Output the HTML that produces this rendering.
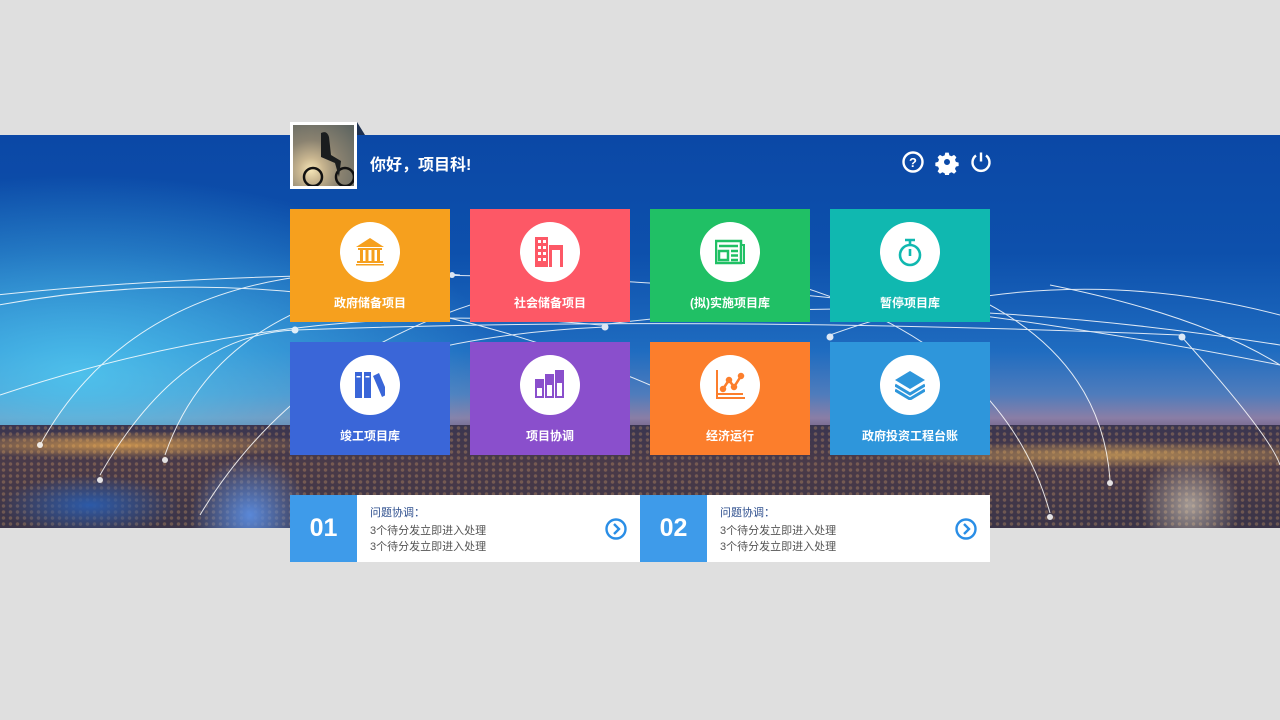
<!DOCTYPE html>
<html><head><meta charset="utf-8"><style>
*{margin:0;padding:0;box-sizing:border-box}
body{width:1280px;height:720px;background:#dfdfdf;position:relative;overflow:hidden;font-family:"Liberation Sans","Noto Sans CJK SC",sans-serif}
.bg{position:absolute;left:0;top:135px;width:1280px;height:393px;overflow:hidden;
background:
radial-gradient(ellipse 420px 200px at 80px 240px,rgba(80,200,240,.9),rgba(80,200,240,0) 100%),
linear-gradient(180deg,#0b48a6 0%,#0d50ac 30%,#1f6cc0 55%,#4f7cbc 66%,#8a7ea6 72%,#6a5a7e 76%,#2a2840 82%,#3a3048 100%);}
.city{position:absolute;left:0;top:290px;width:1280px;height:103px;
background:
radial-gradient(ellipse 200px 14px at 120px 20px,rgba(250,180,80,.7),transparent 100%),
radial-gradient(ellipse 260px 14px at 1120px 30px,rgba(250,190,90,.6),transparent 100%),
radial-gradient(ellipse 90px 30px at 90px 80px,#2c5aa8 0,transparent 100%),
radial-gradient(ellipse 60px 60px at 250px 90px,#5a88d8 0,transparent 100%),
radial-gradient(ellipse 50px 50px at 1190px 80px,rgba(230,220,200,.6),transparent 100%),
radial-gradient(circle at 50% 50%,rgba(255,190,110,.25) 0 1.5px,transparent 2px) 0 0/7px 6px,
linear-gradient(180deg,#3a3550 0%,#4a3a48 40%,#3a3448 100%)}
.av{position:absolute;left:290px;top:122px;width:67px;height:67px;border:3px solid #fff;
background:radial-gradient(circle at 18px 45px,#f6e6b8 0,#c9b690 12px,#8a8270 30px,#5d6460 60px)}
.hi{position:absolute;left:370px;top:151px;color:#fff;font-size:16px;font-weight:bold}
.tile{position:absolute;width:160px;height:113px;color:#fff;text-align:center;font-size:12px;font-weight:bold}
.tile .c{position:absolute;left:50px;top:13px;width:60px;height:60px;border-radius:50%;background:#fff}
.tile .c svg{position:absolute;left:15px;top:15px}
.tile .l{position:absolute;left:0;right:0;top:85px}
.card{position:absolute;top:495px;width:350px;height:67px;background:#fff}
.card .n{position:absolute;left:0;top:0;width:67px;height:67px;background:#3e9bea;color:#fff;font-size:25px;font-weight:bold;text-align:center;line-height:67px}
.card .t{position:absolute;left:80px;top:9px;font-size:11px;color:#2e4f8e}
.card .a{position:absolute;left:80px;top:28px;font-size:11px;color:#555;line-height:16px}
.card .g{position:absolute;left:315px;top:23px}
</style></head><body>
<div class="bg">
<div class="city"></div>
<svg width="1280" height="393" style="position:absolute;left:0;top:0" fill="none" stroke="#fff" stroke-width="1" opacity=".85">
<path d="M-50 180 Q300 100 650 250"/><path d="M-50 165 Q600 90 1330 240"/>
<path d="M200 380 Q320 180 600 140"/><path d="M40 310 Q150 110 460 140"/>
<path d="M0 260 Q300 160 600 190"/><path d="M600 190 Q900 150 1280 210"/>
<path d="M295 195 Q700 180 1180 200"/><path d="M830 200 Q1050 120 1280 180"/>
<path d="M1050 378 Q1000 200 760 140"/><path d="M1110 345 Q1100 200 920 140"/>
<path d="M1180 200 Q1270 300 1280 330"/><path d="M100 340 Q180 200 295 195"/>
<path d="M300 260 Q420 200 605 192"/><path d="M165 320 Q220 160 450 140"/>
<path d="M1050 150 Q1200 180 1280 230"/>
<g fill="#fff" stroke="none"><circle cx="295" cy="195" r="3.5"/><circle cx="605" cy="192" r="3.5"/><circle cx="830" cy="202" r="3.5"/><circle cx="1182" cy="202" r="3.5"/><circle cx="452" cy="140" r="3"/><circle cx="40" cy="310" r="3"/><circle cx="100" cy="345" r="3"/><circle cx="165" cy="325" r="3"/><circle cx="1050" cy="382" r="3"/><circle cx="1110" cy="348" r="3"/></g>
</svg>
</div>
<div class="av"><svg width="61" height="61"><circle cx="20" cy="52" r="9" stroke="#111" stroke-width="2.5" fill="none"/><circle cx="52" cy="52" r="9" stroke="#111" stroke-width="2.5" fill="none"/><path d="M28 8 q6 -3 8 4 l2 18 l10 6 l-2 16 l-4 -14 l-14 -6 z" fill="#1a1d1e"/></svg></div>
<svg style="position:absolute;left:355px;top:122px" width="12" height="14"><path d="M2 0 L10 13 L2 13z" fill="#1d3050"/></svg>
<div class="hi">你好，项目科!</div>
<svg style="position:absolute;left:902px;top:151px" width="92" height="24" fill="none" stroke="#fff" stroke-width="2.4">
<circle cx="11" cy="11" r="9.5"/><text x="11" y="16" font-size="13" font-weight="bold" fill="#fff" stroke="none" text-anchor="middle" font-family="Liberation Sans">?</text>
<g transform="translate(45 11) scale(.85)" fill="#fff" stroke="none">
<path d="M-2 -11h4l.8 3.2 2.6 1.1 2.9-1.7 2.8 2.8-1.7 2.9 1.1 2.6 3.2.8v4l-3.2.8-1.1 2.6 1.7 2.9-2.8 2.8-2.9-1.7-2.6 1.1-.8 3.2h-4l-.8-3.2-2.6-1.1-2.9 1.7-2.8-2.8 1.7-2.9-1.1-2.6-3.2-.8v-4l3.2-.8 1.1-2.6-1.7-2.9 2.8-2.8 2.9 1.7 2.6-1.1z M0 -3.5a3.5 3.5 0 1 0 .01 0z" fill-rule="evenodd"/></g>
<path d="M79 1.5 v9"/><path d="M74 4.5 a8.5 8.5 0 1 0 10 0"/>
</svg>

<div class="tile" style="left:290px;top:209px;background:#f6a01e"><div class="c"><svg width="30" height="30" fill="#f6a01e"><path d="M15 1 L29 10 L1 10z"/><rect x="3" y="11" width="24" height="2"/><rect x="5" y="13" width="3" height="11"/><rect x="10.5" y="13" width="3" height="11"/><rect x="16.5" y="13" width="3" height="11"/><rect x="22" y="13" width="3" height="11"/><rect x="2" y="24" width="26" height="2"/><rect x="1" y="27" width="28" height="1.5"/></svg></div><div class="l">政府储备项目</div></div>
<div class="tile" style="left:470px;top:209px;background:#fd5866"><div class="c"><svg width="30" height="30" fill="#fd5866"><path d="M0 0h13v30H0z M3 3v3h3V3z M8 3v3h3V3z M3 9v3h3V9z M8 9v3h3V9z M3 15v3h3v-3z M8 15v3h3v-3z M3 21v3h3v-3z M8 21v3h3v-3z" fill-rule="evenodd"/><path d="M14 8h14v22h-3V13h-8v17h-3z"/></svg></div><div class="l">社会储备项目</div></div>
<div class="tile" style="left:650px;top:209px;background:#20c065"><div class="c"><svg width="30" height="30" fill="none" stroke="#20c065" stroke-width="2.5"><rect x="1" y="4" width="25" height="22"/><path d="M26 8h3v18h-3" stroke-width="2"/><path d="M4 9h19M4 14h9v9H4zM16 14h7M16 18.5h7M16 23h7"/></svg></div><div class="l">(拟)实施项目库</div></div>
<div class="tile" style="left:830px;top:209px;background:#10b8b0"><div class="c"><svg width="30" height="30" fill="none" stroke="#10b8b0" stroke-width="2.6"><circle cx="15" cy="18" r="10"/><path d="M15 8v-4M10 3h10M15 12v7"/></svg></div><div class="l">暂停项目库</div></div>

<div class="tile" style="left:290px;top:342px;background:#3a66d8"><div class="c"><svg width="30" height="30" fill="#3a66d8"><rect x="0" y="2" width="7" height="26"/><rect x="9" y="2" width="7" height="26"/><rect x="1.5" y="6" width="4" height="1.5" fill="#fff"/><rect x="10.5" y="6" width="4" height="1.5" fill="#fff"/><path d="M18 6 l6 -3 l9 21 l-6 3z"/></svg></div><div class="l">竣工项目库</div></div>
<div class="tile" style="left:470px;top:342px;background:#8a4fcc"><div class="c"><svg width="30" height="30" fill="none" stroke="#8a4fcc" stroke-width="2"><rect x="1" y="10" width="7" height="17"/><rect x="11" y="5" width="7" height="22"/><rect x="21" y="1" width="7" height="26"/><path d="M1 10h7v7H1zM11 5h7v9h-7zM21 1h7v11h-7z" fill="#8a4fcc"/></svg></div><div class="l">项目协调</div></div>
<div class="tile" style="left:650px;top:342px;background:#fc7e2c"><div class="c"><svg width="30" height="30" fill="none" stroke="#fc7e2c" stroke-width="2.5"><path d="M2 0v28h28M2 24h26" stroke-width="2"/><path d="M8 19l6-9 5 7 7-11"/><circle cx="8" cy="19" r="2" fill="#fc7e2c"/><circle cx="14" cy="10" r="2" fill="#fc7e2c"/><circle cx="19" cy="17" r="2" fill="#fc7e2c"/><circle cx="26" cy="6" r="2" fill="#fc7e2c"/></svg></div><div class="l">经济运行</div></div>
<div class="tile" style="left:830px;top:342px;background:#2e96db"><div class="c"><svg width="30" height="30" fill="#2e96db"><path d="M15 1 L30 10 L15 19 L0 10z"/><path d="M0 15 L15 24 L30 15" fill="none" stroke="#2e96db" stroke-width="3"/><path d="M0 20 L15 29 L30 20" fill="none" stroke="#2e96db" stroke-width="3"/></svg></div><div class="l">政府投资工程台账</div></div>

<div class="card" style="left:290px"><div class="n">01</div><div class="t">问题协调：</div><div class="a">3个待分发立即进入处理<br>3个待分发立即进入处理</div><svg class="g" width="22" height="22" fill="none" stroke="#2a8ee6" stroke-width="2.4"><circle cx="11" cy="11" r="9.5"/><path d="M9 6l5 5-5 5"/></svg></div>
<div class="card" style="left:640px"><div class="n">02</div><div class="t">问题协调：</div><div class="a">3个待分发立即进入处理<br>3个待分发立即进入处理</div><svg class="g" width="22" height="22" fill="none" stroke="#2a8ee6" stroke-width="2.4"><circle cx="11" cy="11" r="9.5"/><path d="M9 6l5 5-5 5"/></svg></div>
</body></html>
